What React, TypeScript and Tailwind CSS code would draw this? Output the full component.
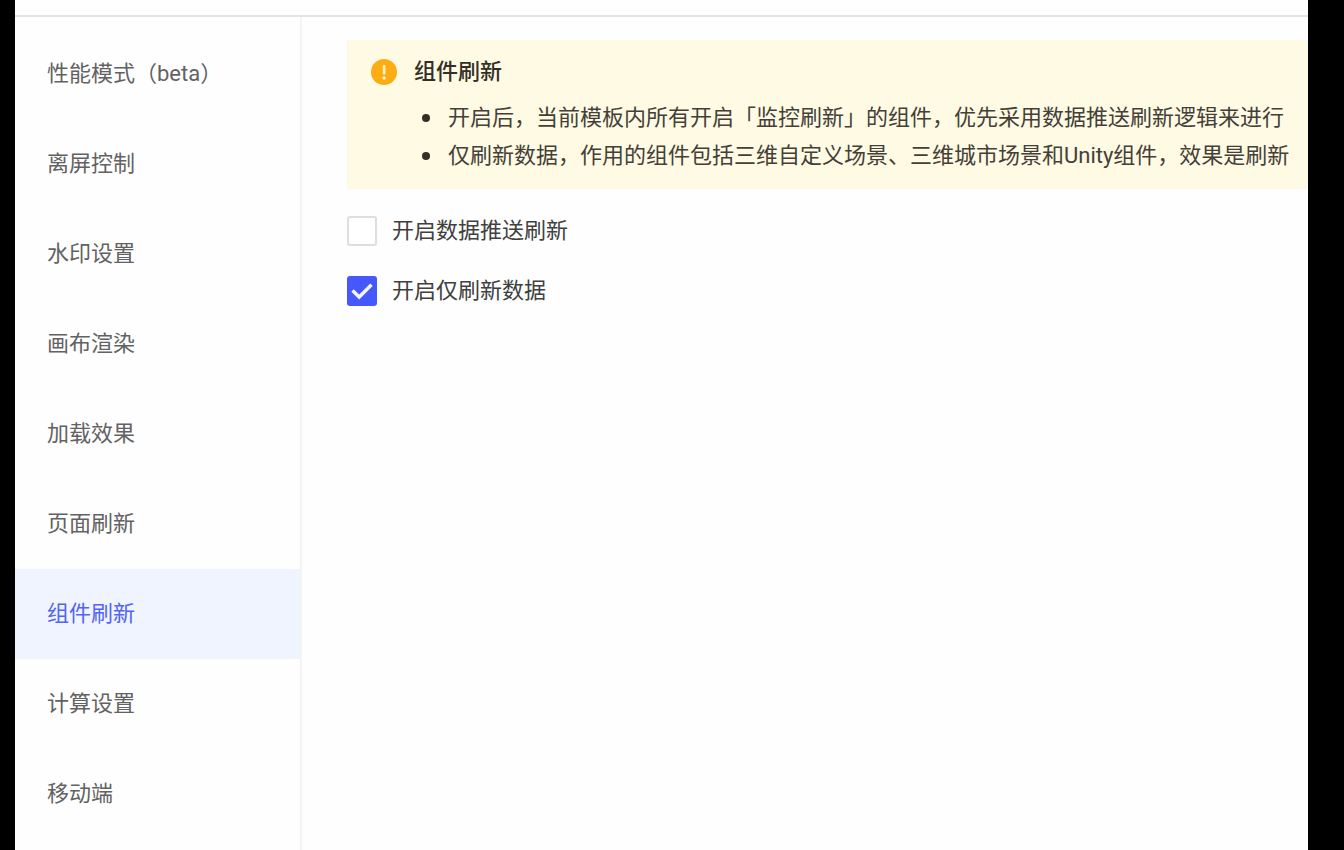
import { useState } from "react";

const menuItems = [
  "性能模式（beta）",
  "离屏控制",
  "水印设置",
  "画布渲染",
  "加载效果",
  "页面刷新",
  "组件刷新",
  "计算设置",
  "移动端",
];

const tips = [
  "开启后，当前模板内所有开启「监控刷新」的组件，优先采用数据推送刷新逻辑来进行",
  "仅刷新数据，作用的组件包括三维自定义场景、三维城市场景和Unity组件，效果是刷新",
];

const WarningIcon = () => (
  <svg viewBox="0 0 26 26" className="size-[26px] mt-1.5 shrink-0" aria-hidden="true">
    <circle cx="13" cy="13" r="13" fill="#fcad14" />
    <rect x="11.8" y="6" width="2.6" height="9.5" rx="1" fill="#fff3cf" />
    <circle cx="13.1" cy="19" r="1.7" fill="#fff3cf" />
  </svg>
);

type CheckboxProps = {
  label: string;
  checked: boolean;
  onChange: (checked: boolean) => void;
};

const Checkbox = ({ label, checked, onChange }: CheckboxProps) => (
  <label className="flex items-center h-[60px] gap-[15px] text-[#404040] cursor-pointer">
    <span className="relative size-[30px] shrink-0">
      <input
        type="checkbox"
        checked={checked}
        onChange={(e) => onChange(e.target.checked)}
        className="block size-full appearance-none rounded-[3px] border-2 border-[#dedede] bg-white checked:border-[#4458fb] checked:bg-[#4458fb]"
      />
      {checked && (
        <svg
          viewBox="0 0 30 30"
          className="absolute inset-0 size-full pointer-events-none"
          fill="none"
          stroke="#f4f5ff"
          strokeWidth="3.4"
        >
          <path d="M5.5 14.5 L12.2 21 L24.5 8.8" />
        </svg>
      )}
    </span>
    {label}
  </label>
);

const App = () => {
  const [active, setActive] = useState("组件刷新");
  const [pushRefresh, setPushRefresh] = useState(false);
  const [dataOnly, setDataOnly] = useState(true);

  return (
    <div className="min-h-screen flex bg-black pl-[15px] pr-9 font-[Roboto,'Noto_Sans_CJK_SC',sans-serif] text-[22px] leading-[38px]">
      <div className="flex flex-col flex-1 min-w-0 bg-[#fefefe]">
        <header className="h-[17px] shrink-0 border-b-2 border-[#e4e4e4]" />
        <div className="flex flex-1">
          <nav className="w-[287px] shrink-0 pt-3 border-r-2 border-[#f4f4f5]">
            {menuItems.map((item) => (
              <button
                key={item}
                type="button"
                onClick={() => setActive(item)}
                className={`block w-full h-[90px] px-8 text-left ${
                  item === active
                    ? "bg-[#f0f4fe] text-[#5264f6]"
                    : "text-[#626262]"
                }`}
              >
                {item}
              </button>
            ))}
          </nav>

          <main className="flex-1 min-w-0 pl-[45px] pt-[23px]">
            <section className="flex gap-[17px] pl-6 pt-[13px] pb-3.5 bg-[#fefae3] text-[#443f38] overflow-hidden">
              <WarningIcon />
              <div className="min-w-0">
                <h2 className="font-medium text-[#332f28]">组件刷新</h2>
                <ul className="mt-2 pl-2 whitespace-nowrap">
                  {tips.map((tip) => (
                    <li
                      key={tip}
                      className="flex items-center gap-[18px] before:size-2 before:shrink-0 before:rounded-full before:bg-[#332f28]"
                    >
                      {tip}
                    </li>
                  ))}
                </ul>
              </div>
            </section>

            <div className="mt-3">
              <Checkbox
                label="开启数据推送刷新"
                checked={pushRefresh}
                onChange={setPushRefresh}
              />
              <Checkbox
                label="开启仅刷新数据"
                checked={dataOnly}
                onChange={setDataOnly}
              />
            </div>
          </main>
        </div>
      </div>
    </div>
  );
};

export default App;
